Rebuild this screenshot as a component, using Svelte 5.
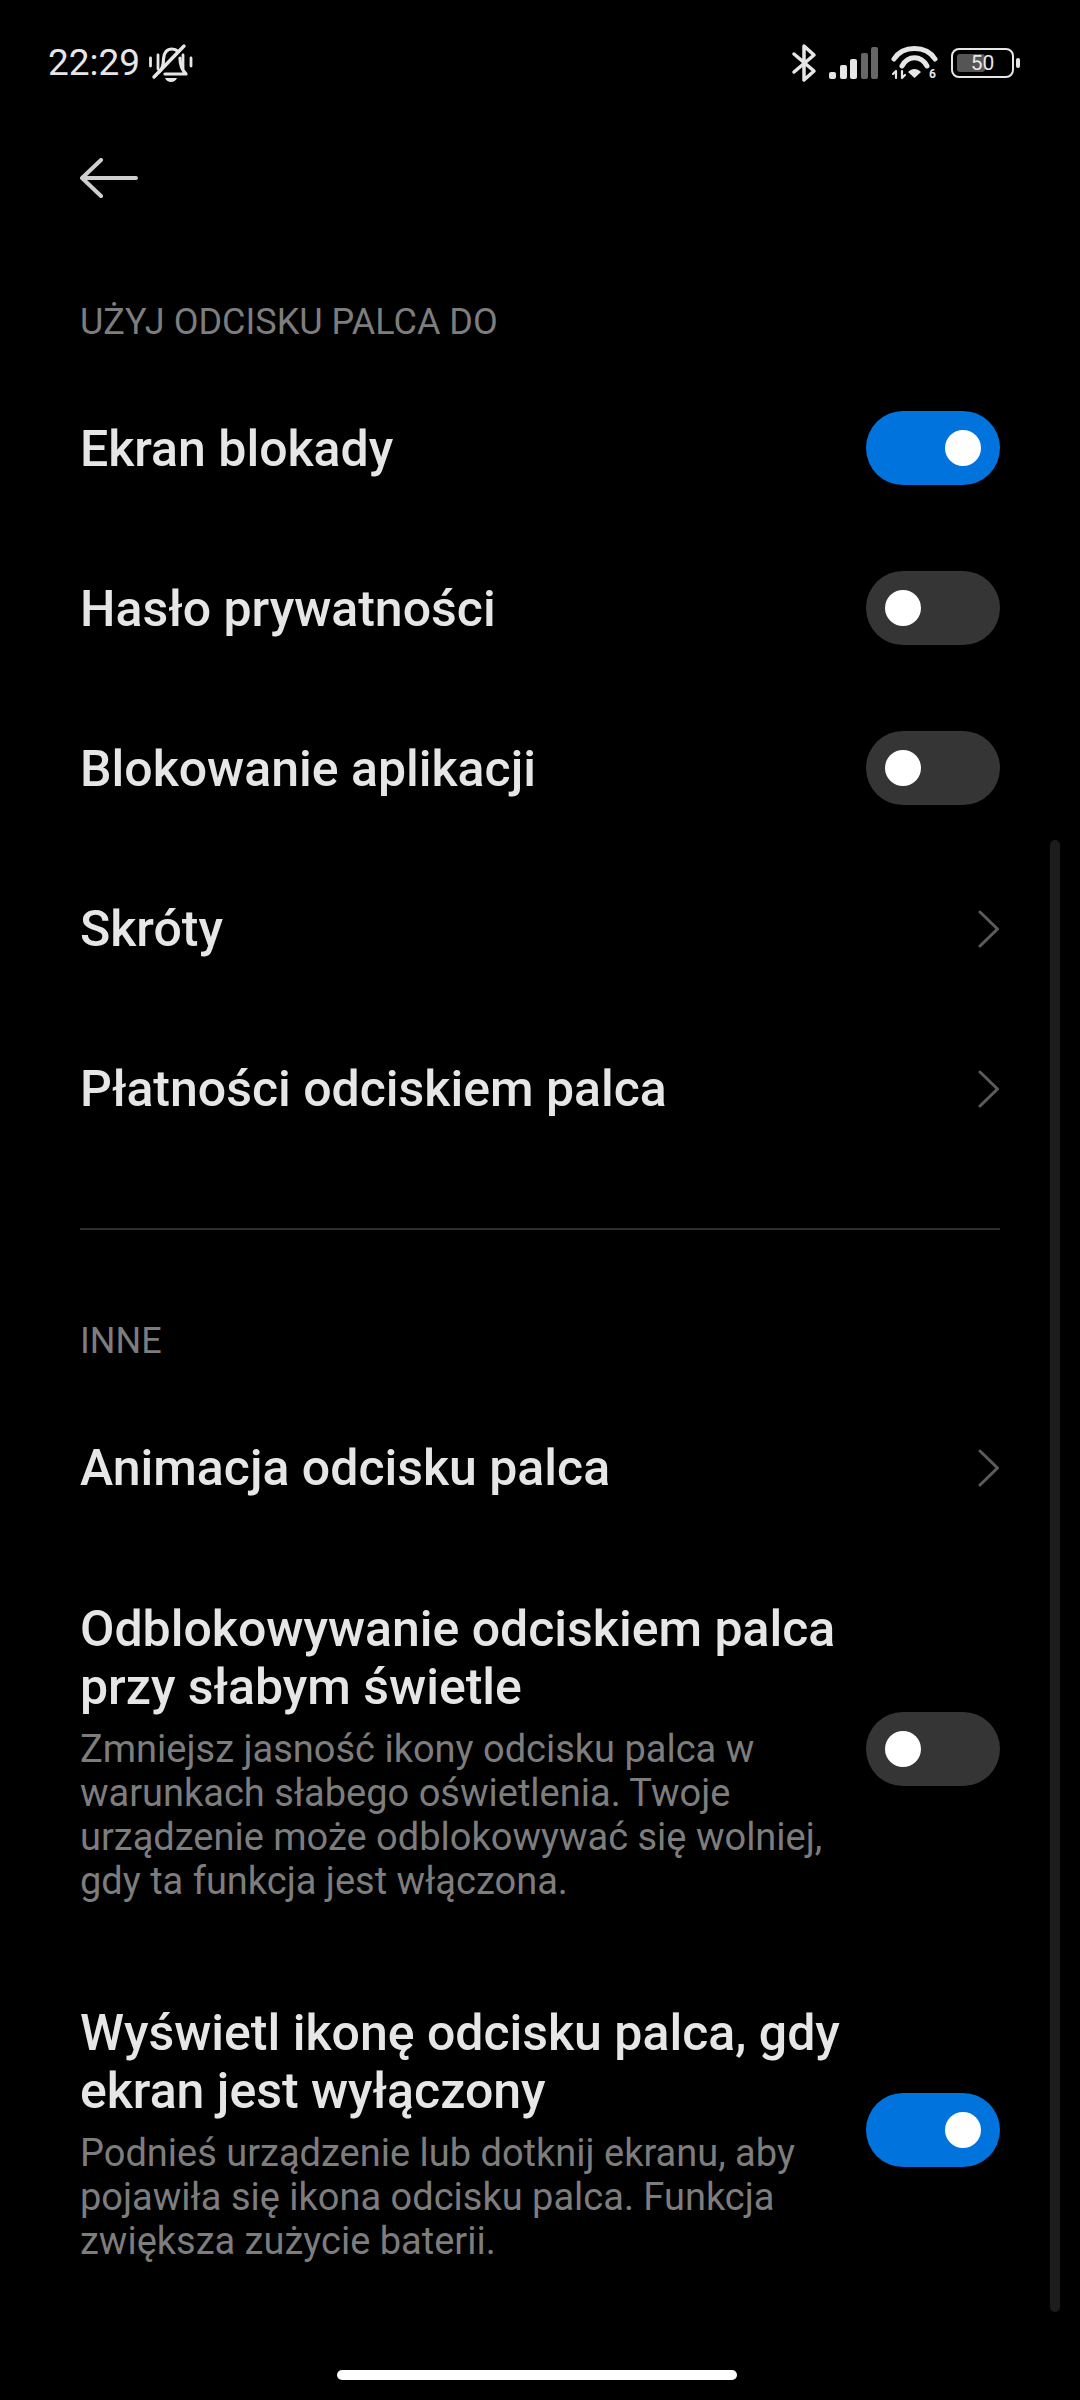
<script lang="ts">
  const first = [
    { title: 'Ekran blokady', kind: 'on' },
    { title: 'Hasło prywatności', kind: 'off' },
    { title: 'Blokowanie aplikacji', kind: 'off' },
    { title: 'Skróty', kind: 'link' },
    { title: 'Płatności odciskiem palca', kind: 'link' }
  ];
  const second = [
    { title: 'Animacja odcisku palca', kind: 'link' },
    {
      title: 'Odblokowywanie odciskiem palca przy słabym świetle',
      desc: 'Zmniejsz jasność ikony odcisku palca w warunkach słabego oświetlenia. Twoje urządzenie może odblokowywać się wolniej, gdy ta funkcja jest włączona.',
      kind: 'off'
    },
    {
      title: 'Wyświetl ikonę odcisku palca, gdy ekran jest wyłączony',
      desc: 'Podnieś urządzenie lub dotknij ekranu, aby pojawiła się ikona odcisku palca. Funkcja zwiększa zużycie baterii.',
      kind: 'on'
    }
  ];
</script>

{#snippet row(item)}
  <div class="row" class:tall={item.desc}>
    <div class="text">
      <h3>{item.title}</h3>
      {#if item.desc}
        <p>{item.desc}</p>
      {/if}
    </div>
    {#if item.kind === 'link'}
      <svg class="chevron" width="22" height="38" viewBox="0 0 22 38">
        <path d="M2 2 L19.500 19 L2 36" fill="none" stroke="#5c5c5c" stroke-width="3" stroke-linecap="round" stroke-linejoin="round" />
      </svg>
    {:else}
      <span class="toggle" class:on={item.kind === 'on'}><i></i></span>
    {/if}
  </div>
{/snippet}

<main>
  <header class="status">
    <div class="left">
      <span class="time">22:29</span>
      <svg width="46" height="40" viewBox="0 0 46 40" fill="none" stroke="#e6e6e6">
        <path d="M3.500 15v8M11 12v14M36 12v14M44 15v8" stroke-width="2.800" stroke-linecap="round" />
        <path d="M12 29c4-3 4.500-7 4.500-13 0-6 3.500-10 8.500-10 2.500 0 4.500 1 6 2.500M33 15c0 6 1 11 6 16H18" stroke-width="3.200" stroke-linejoin="round" stroke-linecap="round" />
        <path d="M7 34 L37 3" stroke-width="3.400" stroke-linecap="round" />
        <path d="M18 35h12c-1 2.800-3.500 4-6 4s-5-1.200-6-4z" fill="#e6e6e6" stroke="none" />
      </svg>
    </div>
    <div class="right">
      <svg width="26" height="40" viewBox="0 0 26 40" fill="none" stroke="#e6e6e6" stroke-width="3.500" stroke-linecap="round" stroke-linejoin="round">
        <path d="M3 11 L23 28 L13 37 V3 L23 12 L3 29" />
      </svg>
      <svg class="signal" width="50" height="32" viewBox="0 0 50 32">
        <rect x="0" y="25" width="7" height="7" rx="2" fill="#e6e6e6" />
        <rect x="11" y="18" width="7" height="14" rx="2" fill="#e6e6e6" />
        <rect x="21" y="12" width="7" height="20" rx="2" fill="#e6e6e6" />
        <rect x="32" y="6" width="7" height="26" rx="2" fill="#666" />
        <rect x="42" y="0" width="7" height="32" rx="2" fill="#666" />
      </svg>
      <svg class="wifi" width="48" height="36" viewBox="0 0 48 36" fill="none" stroke="#e6e6e6" stroke-linecap="round">
        <path d="M3 14 C12 0 35 0 44 14" stroke-width="5" />
        <path d="M11 21 C17 10 30 10 36 21" stroke-width="5" />
        <path d="M17 27 L23.500 33 L30 27 C26 23 21 23 17 27z" fill="#e6e6e6" stroke="none" />
        <path d="M5 26v7M2 29l3-3M11 33v-7M11 33l3-3" stroke-width="2.200" />
        <text x="38" y="33" class="six">6</text>
      </svg>
      <span class="battery">
        <span class="shell"><span class="level"></span><b>50</b></span>
        <span class="nub"></span>
      </span>
    </div>
  </header>

  <nav class="toolbar">
    <svg width="58" height="40" viewBox="0 0 58 40" fill="none" stroke="#cfcfcf" stroke-width="4" stroke-linecap="round" stroke-linejoin="round">
      <path d="M21 2 L2 20 L21 38M2 20 H56" />
    </svg>
  </nav>

  <section class="block">
    <h2>UŻYJ ODCISKU PALCA DO</h2>
    {#each first as item}
      {@render row(item)}
    {/each}
  </section>

  <hr />

  <section class="block">
    <h2>INNE</h2>
    {#each second as item}
      {@render row(item)}
    {/each}
  </section>

  <div class="scrollbar"></div>
  <div class="home"></div>
</main>

<style>
  :global(body) {
    background: #000;
  }

  main {
    position: relative;
    height: 2400px;
    overflow: hidden;
    background: #000;
    font-family: Roboto, "Liberation Sans", sans-serif;
    color: #e6e6e6;
  }

  .status {
    display: flex;
    justify-content: space-between;
    align-items: center;
    height: 62px;
    padding: 32px 60px 0 48px;
  }

  .left,
  .right {
    display: flex;
    align-items: center;
  }

  .left {
    gap: 7px;
  }

  .right {
    gap: 12px;
  }

  .time {
    font-size: 37px;
    line-height: 40px;
  }

  .six {
    font: 700 12px Roboto, sans-serif;
    fill: #e6e6e6;
    stroke: none;
  }

  .battery {
    display: flex;
    align-items: center;
    gap: 2px;
  }

  .shell {
    position: relative;
    display: flex;
    align-items: center;
    justify-content: center;
    box-sizing: border-box;
    width: 63px;
    height: 30px;
    border: 2.500px solid #e6e6e6;
    border-radius: 8px;
  }

  .level {
    position: absolute;
    left: 4px;
    top: 4px;
    bottom: 4px;
    width: 28px;
    border-radius: 3px;
    background: #555;
  }

  .shell b {
    position: relative;
    font-size: 21px;
    font-weight: 400;
  }

  .nub {
    width: 4px;
    height: 10px;
    border-radius: 2px;
    background: #e6e6e6;
  }

  .toolbar {
    display: flex;
    align-items: center;
    height: 84px;
    padding: 42px 80px 0;
  }

  .block {
    padding: 0 80px;
  }

  h2 {
    margin: 0 0 25px;
    padding-top: 80px;
    font-size: 36px;
    line-height: 44px;
    font-weight: 400;
    color: #7d7d7d;
  }

  .row {
    display: flex;
    align-items: center;
    justify-content: space-between;
    gap: 24px;
    min-height: 160px;
  }

  .tall {
    padding: 52px 0 48.500px;
  }

  .text {
    flex: 1;
    min-width: 0;
  }

  h3 {
    margin: 0;
    font-size: 50px;
    line-height: 58px;
    font-weight: 500;
    color: #e6e6e6;
  }

  p {
    margin: 11px 0 0;
    font-size: 38px;
    line-height: 44px;
    color: #7d7d7d;
  }

  .toggle {
    position: relative;
    flex: none;
    width: 134px;
    height: 74px;
    margin-bottom: 2px;
    border-radius: 37px;
    background: #353535;
  }

  .tall .toggle {
    margin-bottom: 6px;
  }

  .toggle i {
    position: absolute;
    top: 19px;
    left: 19px;
    width: 36px;
    height: 36px;
    border-radius: 50%;
    background: #fff;
  }

  .toggle.on {
    background: #0073dd;
  }

  .toggle.on i {
    left: 79px;
  }

  .chevron {
    flex: none;
  }

  hr {
    margin: 59px 80px 9px;
    border: 0;
    height: 2px;
    background: #2e2e2e;
  }

  .scrollbar {
    position: absolute;
    left: 1050px;
    top: 840px;
    width: 10px;
    height: 1472px;
    border-radius: 5px;
    background: #1c1c1c;
  }

  .home {
    position: absolute;
    left: 337px;
    top: 2370px;
    width: 400px;
    height: 10px;
    border-radius: 5px;
    background: #fff;
  }
</style>
